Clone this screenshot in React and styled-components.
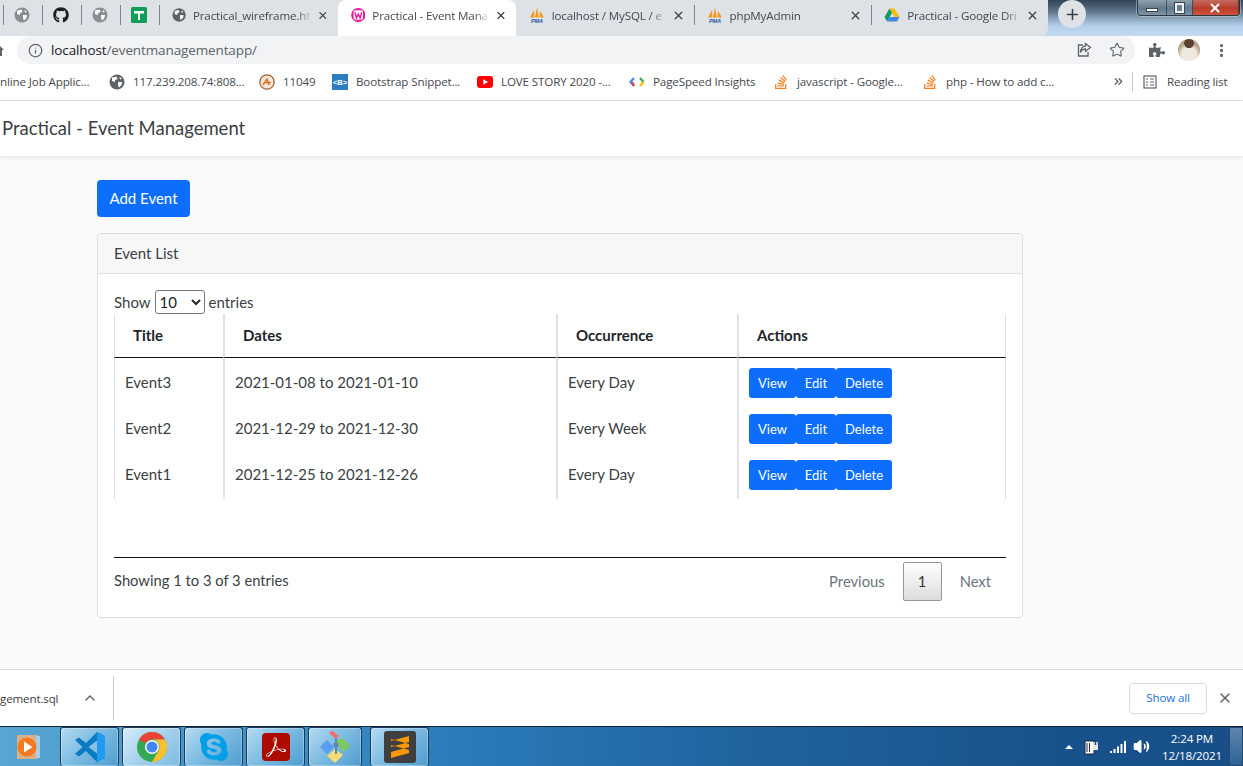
import React from 'react'
import styled, { createGlobalStyle } from 'styled-components'
import { FaGithub, FaStackOverflow, FaSkype, FaPuzzlePiece } from 'react-icons/fa'
import { SiAdobeacrobatreader } from 'react-icons/si'
import { X, Plus, Star, Info, ChevronUp, ChevronsRight, EllipsisVertical, Volume2 } from 'lucide-react'

const GlobalStyle = createGlobalStyle`
  html, body { margin: 0; padding: 0; }
  body { width: 1243px; height: 766px; overflow: hidden; background: #fff; }
`

const uiFont = `"Open Sans", "Noto Sans", sans-serif`
const pageFont = `Lato, "Open Sans", sans-serif`

const Screen = styled.div`
  width: 1243px;
  height: 766px;
  display: flex;
  flex-direction: column;
  overflow: hidden;
  font-family: ${uiFont};
`

/* browser chrome */
const TabStrip = styled.div`
  height: 36px;
  flex: none;
  display: flex;
  align-items: flex-start;
  background: linear-gradient(180deg, #334355 0%, #5c7186 30%, #8ea6bd 52%, #b5cfec 72%, #c4daf2 100%);
`
const TabGroup = styled.div`
  width: 1048px;
  height: 36px;
  padding-left: 3px;
  box-sizing: border-box;
  display: flex;
  background: #dee1e6;
  border-radius: 0 0 8px 0;
`
const PinnedTab = styled.div`
  width: 39px;
  height: 36px;
  box-sizing: border-box;
  padding-bottom: 6px;
  display: flex;
  align-items: center;
  justify-content: center;
  position: relative;
  &::before {
    content: "";
    position: absolute;
    left: 0;
    top: 5px;
    height: 20px;
    width: 1px;
    background: #7f868d;
  }
`
const Tab = styled.div`
  width: ${p => p.$w}px;
  height: 36px;
  box-sizing: border-box;
  padding: 0 9px 6px 13px;
  display: flex;
  align-items: center;
  gap: 7px;
  font-size: 11.6px;
  letter-spacing: -0.15px;
  color: #45494f;
  position: relative;
  background: ${p => (p.$active ? '#fff' : 'transparent')};
  border-radius: ${p => (p.$active ? '8px 8px 0 0' : '0')};
  &::before {
    content: "";
    position: absolute;
    left: 0;
    top: 5px;
    height: 20px;
    width: 1px;
    background: ${p => (p.$noLine ? 'transparent' : '#7f868d')};
  }
`
const TabTitle = styled.span`
  flex: 1;
  white-space: nowrap;
  -webkit-mask-image: linear-gradient(90deg, #000 88%, rgba(0, 0, 0, .15) 100%);
  mask-image: linear-gradient(90deg, #000 88%, rgba(0, 0, 0, .15) 100%);
`
const NewTab = styled.div`
  width: 28px;
  height: 28px;
  margin-left: 10px;
  border-radius: 50%;
  background: #dee1e6;
  display: flex;
  align-items: center;
  justify-content: center;
  color: #3c4043;
`
const WindowControls = styled.div`
  margin-left: auto;
  margin-right: 3px;
  width: 103px;
  height: 16px;
  box-sizing: border-box;
  display: flex;
  border: 1px solid #2d3642;
  border-top: none;
  border-radius: 0 0 4px 4px;
  overflow: hidden;
  box-shadow: 0 0 0 1px rgba(255, 255, 255, .35);
`
const WinButton = styled.div`
  width: ${p => p.$w}px;
  display: flex;
  align-items: center;
  justify-content: center;
  border-right: 1px solid rgba(30, 40, 50, .6);
  background: ${p => (p.$close
    ? 'linear-gradient(180deg, #c46a5f 0%, #b83d2b 55%, #d1553c 100%)'
    : 'linear-gradient(180deg, #8fa0ae 0%, #64798c 55%, #7d93a7 100%)')};
`
const MinBar = styled.i`
  width: 12px;
  height: 4px;
  margin-top: 4px;
  background: #fff;
  border: 1px solid #3a4652;
  box-sizing: border-box;
`
const RestoreBox = styled.i`
  width: 9px;
  height: 10px;
  border: 2px solid #eef2f5;
  outline: 1px solid #3a4652;
  box-sizing: border-box;
`

const AddressRow = styled.div`
  height: 28px;
  flex: none;
  display: flex;
  align-items: center;
  background: #fff;
`
const HomeStub = styled.div`
  width: 17px;
  display: flex;
`
const AddressBar = styled.div`
  width: 1118px;
  height: 28px;
  box-sizing: border-box;
  padding: 0 10px 0 11px;
  border-radius: 14px;
  background: #f1f3f4;
  display: flex;
  align-items: center;
  gap: 8px;
  font-size: 13.5px;
  letter-spacing: -0.12px;
  color: #202124;
  white-space: nowrap;
`
const UrlPath = styled.span`
  color: #5f6368;
`
const BarEnd = styled.div`
  margin-left: auto;
  display: flex;
  align-items: center;
  gap: 17px;
  color: #5f6368;
`
const ToolIcons = styled.div`
  flex: 1;
  display: flex;
  align-items: center;
  justify-content: space-between;
  padding: 0 13px 0 14px;
  color: #5f6368;
`
const Avatar = styled.div`
  width: 22px;
  height: 22px;
  border-radius: 50%;
  background: radial-gradient(circle at 50% 20%, #5a4030 0 22%, transparent 24%), radial-gradient(circle at 50% 70%, #efe9e0 0 38%, #b9a58a 60%);
`

const BookmarkBar = styled.div`
  height: 37px;
  flex: none;
  box-sizing: border-box;
  padding-bottom: 1px;
  display: flex;
  align-items: center;
  border-bottom: 1px solid #e0e2e6;
  background: #fff;
  font-size: 11.6px;
  letter-spacing: -0.13px;
  color: #45494f;
  white-space: nowrap;
`
const Bookmark = styled.div`
  width: ${p => p.$w}px;
  flex: none;
  display: flex;
  align-items: center;
  gap: 8px;
`
const BookmarkEnd = styled.div`
  flex: 1;
  display: flex;
  align-items: center;
  color: #5f6368;
  gap: 10px;
`
const MoreBookmarks = styled.span`
  display: flex;
  margin-left: -1px;
`
const Divider = styled.i`
  width: 1px;
  height: 20px;
  margin-left: -3px;
  background: #c8cbd0;
`
const ReadingLabel = styled.span`
  color: #45494f;
`

/* the page itself */
const NavBar = styled.div`
  height: 55px;
  flex: none;
  box-sizing: border-box;
  padding: 0 0 2px 2px;
  display: flex;
  align-items: center;
  background: #fff;
  box-shadow: 0 2px 4px rgba(0, 0, 0, .075);
  font-family: ${pageFont};
  font-size: 18.5px;
  color: #3a3f44;
  position: relative;
`
const Main = styled.div`
  flex: 1;
  box-sizing: border-box;
  padding: 24px 0 0 97px;
  background: #f8fafc;
  font-family: ${pageFont};
  font-size: 15px;
  color: #3a3f44;
`
const AddButton = styled.button`
  display: block;
  width: 93px;
  height: 37px;
  margin-bottom: 16px;
  padding: 0 0 2px;
  border: none;
  border-radius: 4px;
  background: #0d6efd;
  color: #fff;
  font: inherit;
  font-size: 15px;
`
const Card = styled.div`
  width: 926px;
  box-sizing: border-box;
  background: #fff;
  border: 1px solid #dfe0e1;
  border-radius: 4px;
`
const CardHeader = styled.div`
  height: 40px;
  box-sizing: border-box;
  padding: 0 0 2px 16px;
  display: flex;
  align-items: center;
  background: #f7f7f7;
  border-bottom: 1px solid #dfe0e1;
  border-radius: 3px 3px 0 0;
`
const CardBody = styled.div`
  padding: 16px;
`
const LengthRow = styled.div`
  height: 24px;
  display: flex;
  align-items: center;
  gap: 4px;
`
const LengthSelect = styled.select`
  width: 50px;
  height: 24px;
  padding: 0;
  border: 1px solid #767676;
  border-radius: 3px;
  background: #fff;
  color: #212529;
  font: inherit;
`
const EventTable = styled.table`
  width: 892px;
  table-layout: fixed;
  border-collapse: separate;
  border-spacing: 0;
  color: #3a3f44;
`
const HeadCell = styled.th`
  width: ${p => p.$w}px;
  height: 41px;
  box-sizing: content-box;
  padding: 0 0 2px 18px;
  text-align: left;
  font-weight: 700;
  color: #212529;
  border-bottom: 1px solid #111;
  border-left: 2px solid #dee2e6;
  &:first-child { border-left-width: 1px; }
  &:last-child { border-right: 1px solid #dee2e6; }
`
const Cell = styled.td`
  padding: 10px 10px 6px;
  line-height: 28px;
  vertical-align: top;
  border-left: 2px solid #dee2e6;
  &:first-child { border-left-width: 1px; }
  &:last-child { border-right: 1px solid #dee2e6; }
  tr:last-child & { padding-bottom: 9px; }
`
const ActionGroup = styled.div`
  display: flex;
`
const ActionButton = styled.button`
  width: ${p => p.$w}px;
  height: 30px;
  padding: 0 0 1px;
  border: none;
  border-radius: 3px;
  background: #0d6efd;
  color: #fff;
  font: inherit;
  font-size: 13px;
`
const TableFooter = styled.div`
  margin-top: 58px;
  padding-top: 4px;
  border-top: 1px solid #111;
  display: flex;
  align-items: center;
  justify-content: space-between;
`
const FooterInfo = styled.span`
  padding-bottom: 3px;
  font-size: 14.75px;
`
const Pager = styled.div`
  display: flex;
  align-items: center;
  gap: 18px;
  padding-right: 15px;
  color: #6c757d;
  font-size: 14.75px;
`
const PagerLink = styled.span`
  padding-bottom: 2px;
`
const PageCurrent = styled.div`
  width: 39px;
  height: 39px;
  box-sizing: border-box;
  padding-bottom: 2px;
  display: flex;
  align-items: center;
  justify-content: center;
  border: 1px solid #979797;
  border-radius: 2px;
  background: linear-gradient(180deg, #fff 0%, #dcdcdc 100%);
  color: #333;
`

/* download shelf + windows taskbar */
const DownloadBar = styled.div`
  height: 57px;
  flex: none;
  box-sizing: border-box;
  display: flex;
  align-items: center;
  border-top: 1px solid #dcdee0;
  background: #fff;
  font-size: 11.6px;
  letter-spacing: -0.15px;
  color: #3c4043;
`
const FileName = styled.div`
  width: 114px;
  height: 44px;
  box-sizing: border-box;
  display: flex;
  align-items: center;
  justify-content: space-between;
  padding-right: 15px;
  border-right: 1px solid #c8cacc;
`
const ShowAll = styled.div`
  margin-left: auto;
  width: 78px;
  height: 31px;
  box-sizing: border-box;
  padding-bottom: 2px;
  display: flex;
  align-items: center;
  justify-content: center;
  border: 1px solid #dadce0;
  border-radius: 4px;
  color: #1a73e8;
`
const ShelfClose = styled.div`
  width: 36px;
  display: flex;
  justify-content: center;
  color: #5f6368;
`
const Taskbar = styled.div`
  height: 40px;
  flex: none;
  box-sizing: border-box;
  display: flex;
  align-items: stretch;
  border-top: 1px solid #16232f;
  background: linear-gradient(90deg, #58a6d2 0%, #3f93c9 20%, #2b7cb9 36%, #1f649f 60%, #18528c 85%, #174e88 100%);
`
const MediaSlot = styled.div`
  width: 60px;
  display: flex;
  align-items: center;
  justify-content: center;
  padding-left: 4px;
  padding-right: 8px;
  box-sizing: border-box;
`
const TaskButton = styled.div`
  width: ${p => p.$w || 59}px;
  margin-right: ${p => p.$gap ?? 3}px;
  box-sizing: border-box;
  display: flex;
  align-items: center;
  justify-content: center;
  border: 1px solid #1d3b56;
  border-bottom: none;
  border-radius: 3px;
  box-shadow: inset 0 0 0 1px rgba(255, 255, 255, .3);
  background: ${p => (p.$active
    ? 'linear-gradient(135deg, #d7ecf8 0%, #a5d1ec 50%, #7dbbe2 100%)'
    : 'linear-gradient(135deg, #b4dbf1 0%, #7fbde2 45%, #4f9dd1 100%)')};
`
const Tray = styled.div`
  margin-left: auto;
  display: flex;
  align-items: center;
  color: #fff;
`
const TrayArrow = styled.i`
  width: 0;
  height: 0;
  margin-right: 11px;
  border-left: 4px solid transparent;
  border-right: 4px solid transparent;
  border-bottom: 4px solid #fff;
`
const TrayIcon = styled.div`
  display: flex;
  margin-right: ${p => p.$gap}px;
`
const Clock = styled.div`
  width: 74px;
  text-align: center;
  font-size: 11.6px;
  letter-spacing: -0.15px;
  line-height: 17px;
  color: #fff;
`
const ShowDesktop = styled.div`
  width: 14px;
  align-self: stretch;
  border: 1px solid #22476e;
  box-sizing: border-box;
  background: linear-gradient(180deg, #5d87ad, #2d6296);
`

/* little drawings */
const Globe = ({ size = 16, color = '#5f6368' }) => (
  <svg width={size} height={size} viewBox="0 0 16 16">
    <circle cx="8" cy="8" r="7.5" fill={color} />
    <path d="M3 3.5 L7.5 2.5 L8.5 5 L6 6 L6 8 L3 7 Z M9 8 L13 8 L12.5 11 L10 13.5 L9 11 Z M10.5 3 L13 4.5 L11 5.5 Z" fill="#fff" />
  </svg>
)
const SheetsIcon = () => (
  <svg width="16" height="16" viewBox="0 0 16 16">
    <rect width="16" height="16" rx="1.5" fill="#0f9d58" />
    <path d="M3 4 H13 V6.5 H9 V13 H7 V6.5 H3 Z" fill="#fff" />
  </svg>
)
const WampIcon = () => (
  <svg width="16" height="16" viewBox="0 0 16 16">
    <circle cx="8" cy="8" r="7.8" fill="#f0149c" />
    <rect x="2.8" y="2.8" width="10.4" height="10.4" rx="2" fill="#fff" />
    <path d="M4.3 4.8 L6 11.2 L8 7 L10 11.2 L11.7 4.8" fill="none" stroke="#f0149c" strokeWidth="1.5" />
  </svg>
)
const PmaIcon = () => (
  <svg width="16" height="16" viewBox="0 0 16 16">
    <path d="M1 10.5 L5 3 L5.5 10.5 Z M6 10.5 L8 0.5 L10 10.5 Z M10.5 10.5 L11 4 L15 10.5 Z" fill="#f29a1f" />
    <text x="8" y="15.5" textAnchor="middle" fontSize="5.6" fontWeight="700" fontStyle="italic" fontFamily="Liberation Sans, sans-serif" fill="#2c5aa0">PMA</text>
  </svg>
)
const DriveIcon = () => (
  <svg width="16" height="16" viewBox="0 0 16 16">
    <path d="M5.5 1.5 H10.5 L15.5 10 H10.5 Z" fill="#fbbc04" />
    <path d="M5.5 1.5 L8 6 L3 14.5 L0.5 10 Z" fill="#0f9d58" />
    <path d="M5.5 10 H15.5 L13 14.5 H3 Z" fill="#4285f4" />
  </svg>
)
const RoundBadge = () => (
  <svg width="16" height="16" viewBox="0 0 16 16">
    <circle cx="8" cy="8" r="7.2" fill="#f7e6d6" stroke="#9a5a2c" strokeWidth="1.2" />
    <path d="M4 11 L8 5 L10 11 M6 8.5 H12" fill="none" stroke="#d9702a" strokeWidth="1.4" />
  </svg>
)
const SnippetIcon = () => (
  <svg width="16" height="16" viewBox="0 0 16 16">
    <rect width="16" height="16" fill="#2e7cc0" />
    <text x="8" y="11" textAnchor="middle" fontSize="7.5" fontWeight="700" fontFamily="Liberation Sans, sans-serif" fill="#fff">&lt;B&gt;</text>
  </svg>
)
const YouTubeIcon = () => (
  <svg width="16" height="12" viewBox="0 0 16 12">
    <rect width="16" height="12" rx="3" fill="#f00" />
    <path d="M6.3 3.2 L11 6 L6.3 8.8 Z" fill="#fff" />
  </svg>
)
const PageSpeedIcon = () => (
  <svg width="16" height="10" viewBox="0 0 16 10">
    <path d="M5 1 L1.5 5 L5 9" fill="none" stroke="#4285f4" strokeWidth="2.2" />
    <path d="M3 5 L5 9" fill="none" stroke="#ea4335" strokeWidth="2.2" />
    <path d="M11 1 L14.5 5" fill="none" stroke="#34a853" strokeWidth="2.2" />
    <path d="M14.5 5 L11 9" fill="none" stroke="#fbbc04" strokeWidth="2.2" />
  </svg>
)
const ReadingIcon = () => (
  <svg width="14" height="14" viewBox="0 0 14 14" fill="none" stroke="#5f6368" strokeWidth="1.2">
    <rect x="1" y="1" width="12" height="12" />
    <path d="M3 4 H5 M7 4 H11 M3 7 H5 M7 7 H11 M3 10 H5 M7 10 H11" />
  </svg>
)
const ShareIcon = () => (
  <svg width="16" height="16" viewBox="0 0 16 16" fill="none" stroke="#5f6368" strokeWidth="1.3">
    <path d="M7 3 H2.5 V14 H12 V10" />
    <path d="M9.5 1.5 L14.5 5.5 L9.5 9.5 V7 C7 7 5.5 8 4.5 10.5 C4.5 7 6.5 4.2 9.5 4 Z" />
  </svg>
)
const MediaIcon = () => (
  <svg width="28" height="28" viewBox="0 0 28 28">
    <rect x="3" y="2" width="21" height="24" rx="1" fill="#d9b08a" />
    <rect x="22" y="3" width="4" height="22" fill="#a8cfe6" />
    <circle cx="13" cy="14" r="9.5" fill="#f47a1f" />
    <path d="M10 8.5 L18.5 14 L10 19.5 Z" fill="#fff" />
  </svg>
)
const VsCodeIcon = () => (
  <svg width="32" height="32" viewBox="0 0 32 32">
    <path d="M23 1 L31 5 V27 L23 31 L12 20 L5 25.5 L1 23 L8.5 16 L1 9 L5 6.5 L12 12 Z" fill="#0a7ac4" />
    <path d="M23 1 L31 5 V27 L23 31 Z" fill="#1f9cf0" />
    <path d="M23 9.5 V22.5 L14.5 16 Z" fill="#8fbfe2" />
  </svg>
)
const ChromeIcon = () => (
  <svg width="30" height="30" viewBox="0 0 30 30">
    <circle cx="15" cy="15" r="15" fill="#34a853" />
    <path d="M15 0 A15 15 0 0 1 28 7.5 L15 7.5 A7.5 7.5 0 0 0 8.5 11.2 L2 7.5 A15 15 0 0 1 15 0 Z" fill="#ea4335" />
    <path d="M28 7.5 A15 15 0 0 1 15 30 L21.5 18.7 A7.5 7.5 0 0 0 15 7.5 Z" fill="#fbc02d" />
    <circle cx="15" cy="15" r="7" fill="#fff" />
    <circle cx="15" cy="15" r="5.5" fill="#4285f4" />
  </svg>
)
const PdfTile = styled.div`
  width: 28px;
  height: 28px;
  border-radius: 4px;
  background: #ad0b00;
  display: flex;
  align-items: center;
  justify-content: center;
  color: #fff;
`
const GitIcon = () => (
  <svg width="34" height="34" viewBox="0 0 34 34">
    <path d="M9 10 L2 17 L9 24 L16 17 Z" fill="#5b9cf0" />
    <path d="M11 3 L14 0.5 L21 6 L18 9 Z" fill="#ef6f6f" />
    <path d="M17 11 L25 8 L32 16 L25 22 L21 16 Z" fill="#7ec860" />
    <path d="M9 26 L17 19 L25 25 L17 33 Z" fill="#f6dc78" />
    <circle cx="18" cy="15" r="2.5" fill="#5a88b0" />
    <path d="M18 8 V24" stroke="#5a88b0" strokeWidth="2" />
  </svg>
)
const SublimeIcon = () => (
  <svg width="32" height="32" viewBox="0 0 32 32">
    <rect width="32" height="32" rx="3" fill="#3f3f3f" />
    <path d="M7 10 L25 5 V11 L7 16 Z M7 14 L25 19 V13 L7 8 Z M7 21 L25 16 V22 L7 27 Z" fill="#ff9800" />
  </svg>
)
const PowerIcon = () => (
  <svg width="16" height="16" viewBox="0 0 16 16">
    <rect x="1" y="2" width="9" height="13" fill="#fff" stroke="#1b2a3a" />
    <path d="M3 4 V13 M5.5 4 V13" stroke="#1b2a3a" />
    <rect x="9" y="6" width="5" height="5" fill="#e8e8e8" />
    <path d="M10 3 V6 M13 3 V6" stroke="#fff" strokeWidth="1.4" />
  </svg>
)
const SignalIcon = () => (
  <svg width="16" height="12" viewBox="0 0 16 12" fill="#fff">
    <rect x="0" y="10" width="2" height="2" />
    <rect x="3.5" y="8" width="2" height="4" />
    <rect x="7" y="5.5" width="2" height="6.5" />
    <rect x="10.5" y="3" width="2" height="9" />
    <rect x="14" y="0" width="2" height="12" />
  </svg>
)

const tabs = [
  { title: 'Practical_wireframe.ht', icon: <Globe />, w: 179 },
  { title: 'Practical - Event Mana', icon: <WampIcon />, w: 178, active: true },
  { title: 'localhost / MySQL / e', icon: <PmaIcon />, w: 178, noLine: true },
  { title: 'phpMyAdmin', icon: <PmaIcon />, w: 178 },
  { title: 'Practical - Google Dri', icon: <DriveIcon />, w: 177 },
]

const bookmarks = [
  { w: 109, label: 'nline Job Applic...' },
  { w: 150, label: '117.239.208.74:808...', icon: <Globe size={16} /> },
  { w: 73, label: '11049', icon: <RoundBadge /> },
  { w: 145, label: 'Bootstrap Snippet...', icon: <SnippetIcon /> },
  { w: 152, label: 'LOVE STORY 2020 -...', icon: <YouTubeIcon /> },
  { w: 144, label: 'PageSpeed Insights', icon: <PageSpeedIcon /> },
  { w: 149, label: 'javascript - Google...', icon: <FaStackOverflow size={16} color="#f48024" /> },
  { w: 191, label: 'php - How to add c...', icon: <FaStackOverflow size={16} color="#f48024" /> },
]

const events = [
  { title: 'Event3', dates: '2021-01-08 to 2021-01-10', occurrence: 'Every Day' },
  { title: 'Event2', dates: '2021-12-29 to 2021-12-30', occurrence: 'Every Week' },
  { title: 'Event1', dates: '2021-12-25 to 2021-12-26', occurrence: 'Every Day' },
]

export default function App() {
  return (
    <Screen>
      <GlobalStyle />
      <TabStrip>
        <TabGroup>
          <PinnedTab><Globe color="#8a8d91" /></PinnedTab>
          <PinnedTab><FaGithub size={16} color="#1b1f23" /></PinnedTab>
          <PinnedTab><Globe color="#8a8d91" /></PinnedTab>
          <PinnedTab><SheetsIcon /></PinnedTab>
          {tabs.map(t => (
            <Tab key={t.title} $w={t.w} $active={t.active} $noLine={t.active || t.noLine}>
              {t.icon}
              <TabTitle>{t.title}</TabTitle>
              <X size={13} strokeWidth={2.4} color="#3c4043" />
            </Tab>
          ))}
        </TabGroup>
        <NewTab><Plus size={17} strokeWidth={2.2} /></NewTab>
        <WindowControls>
          <WinButton $w={29}><MinBar /></WinButton>
          <WinButton $w={26}><RestoreBox /></WinButton>
          <WinButton $w={47} $close><X size={14} strokeWidth={3.4} color="#fff" /></WinButton>
        </WindowControls>
      </TabStrip>

      <AddressRow>
        <HomeStub>
          <svg width="4" height="12" viewBox="0 0 4 12"><path d="M0 2 L4 6 H2 V12 H0 Z" fill="#5f6368" /></svg>
        </HomeStub>
        <AddressBar>
          <Info size={15} color="#5f6368" />
          <span>localhost<UrlPath>/eventmanagementapp/</UrlPath></span>
          <BarEnd>
            <ShareIcon />
            <Star size={16} strokeWidth={1.6} />
          </BarEnd>
        </AddressBar>
        <ToolIcons>
          <FaPuzzlePiece size={16} />
          <Avatar />
          <EllipsisVertical size={17} strokeWidth={2.6} />
        </ToolIcons>
      </AddressRow>

      <BookmarkBar>
        {bookmarks.map(b => (
          <Bookmark key={b.label} $w={b.w}>
            {b.icon}
            <span>{b.label}</span>
          </Bookmark>
        ))}
        <BookmarkEnd>
          <MoreBookmarks><ChevronsRight size={13} strokeWidth={2.4} /></MoreBookmarks>
          <Divider />
          <ReadingIcon />
          <ReadingLabel>Reading list</ReadingLabel>
        </BookmarkEnd>
      </BookmarkBar>

      <NavBar>Practical - Event Management</NavBar>

      <Main>
        <AddButton>Add Event</AddButton>
        <Card>
          <CardHeader>Event List</CardHeader>
          <CardBody>
            <LengthRow>
              Show
              <LengthSelect defaultValue="10">
                <option>10</option>
                <option>25</option>
                <option>50</option>
                <option>100</option>
              </LengthSelect>
              entries
            </LengthRow>
            <EventTable>
              <thead>
                <tr>
                  <HeadCell $w={90}>Title</HeadCell>
                  <HeadCell $w={313}>Dates</HeadCell>
                  <HeadCell $w={161}>Occurrence</HeadCell>
                  <HeadCell $w={248}>Actions</HeadCell>
                </tr>
              </thead>
              <tbody>
                {events.map(ev => (
                  <tr key={ev.title}>
                    <Cell>{ev.title}</Cell>
                    <Cell>{ev.dates}</Cell>
                    <Cell>{ev.occurrence}</Cell>
                    <Cell>
                      <ActionGroup>
                        <ActionButton $w={47}>View</ActionButton>
                        <ActionButton $w={40}>Edit</ActionButton>
                        <ActionButton $w={56}>Delete</ActionButton>
                      </ActionGroup>
                    </Cell>
                  </tr>
                ))}
              </tbody>
            </EventTable>
            <TableFooter>
              <FooterInfo>Showing 1 to 3 of 3 entries</FooterInfo>
              <Pager>
                <PagerLink>Previous</PagerLink>
                <PageCurrent>1</PageCurrent>
                <PagerLink>Next</PagerLink>
              </Pager>
            </TableFooter>
          </CardBody>
        </Card>
      </Main>

      <DownloadBar>
        <FileName>
          <span>gement.sql</span>
          <ChevronUp size={16} color="#5f6368" />
        </FileName>
        <ShowAll>Show all</ShowAll>
        <ShelfClose><X size={16} strokeWidth={2.2} /></ShelfClose>
      </DownloadBar>

      <Taskbar>
        <MediaSlot><MediaIcon /></MediaSlot>
        <TaskButton><VsCodeIcon /></TaskButton>
        <TaskButton $active><ChromeIcon /></TaskButton>
        <TaskButton><FaSkype size={32} color="#009fe8" /></TaskButton>
        <TaskButton><PdfTile><SiAdobeacrobatreader size={20} /></PdfTile></TaskButton>
        <TaskButton $w={54} $gap={8}><GitIcon /></TaskButton>
        <TaskButton><SublimeIcon /></TaskButton>
        <Tray>
          <TrayArrow />
          <TrayIcon $gap={10}><PowerIcon /></TrayIcon>
          <TrayIcon $gap={7}><SignalIcon /></TrayIcon>
          <TrayIcon $gap={5}><Volume2 size={17} fill="#fff" /></TrayIcon>
          <Clock>2:24 PM<br />12/18/2021</Clock>
          <ShowDesktop />
        </Tray>
      </Taskbar>
    </Screen>
  )
}
